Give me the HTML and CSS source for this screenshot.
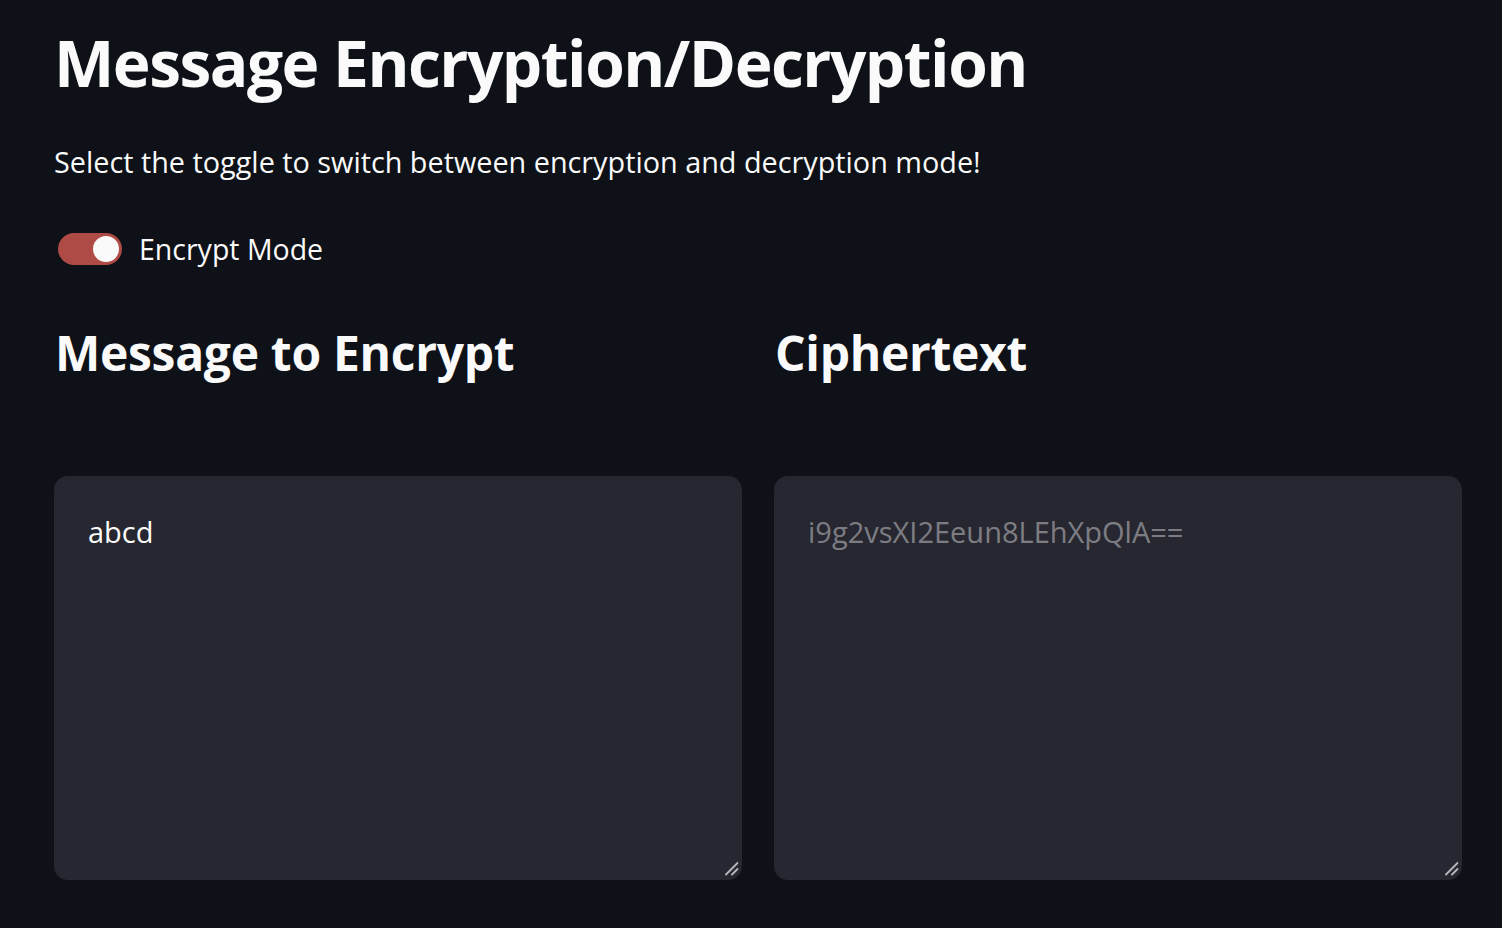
FILE: index.html
```html
<!DOCTYPE html>
<html lang="en">
<head>
<meta charset="utf-8">
<title>Message Encryption/Decryption</title>
<link rel="stylesheet" href="styles.css">
</head>
<body>
<main class="app">
  <h1 class="title">Message Encryption/Decryption</h1>
  <p class="lead">Select the toggle to switch between encryption and decryption mode!</p>
  <label class="toggle-row">
    <span class="toggle"><span class="knob"></span></span>
    <span class="toggle-label">Encrypt Mode</span>
  </label>
  <div class="columns">
    <section class="col">
      <h2 class="heading">Message to Encrypt</h2>
      <div class="box-wrap">
        <textarea class="box">abcd</textarea>
        <svg class="grip" width="16" height="16" viewBox="0 0 16 16" aria-hidden="true">
          <path d="M2 13.5 L13.5 2" stroke="#2a2b33" stroke-width="3.6" stroke-linecap="round"/>
          <path d="M8 13.5 L13.5 8" stroke="#2a2b33" stroke-width="3.6" stroke-linecap="round"/>
          <path d="M2 13.5 L13.5 2" stroke="#b8b9bf" stroke-width="1.8" stroke-linecap="round"/>
          <path d="M8 13.5 L13.5 8" stroke="#b8b9bf" stroke-width="1.8" stroke-linecap="round"/>
        </svg>
      </div>
    </section>
    <section class="col">
      <h2 class="heading">Ciphertext</h2>
      <div class="box-wrap">
        <textarea class="box box-disabled" disabled>i9g2vsXI2Eeun8LEhXpQlA==</textarea>
        <svg class="grip" width="16" height="16" viewBox="0 0 16 16" aria-hidden="true">
          <path d="M2 13.5 L13.5 2" stroke="#2a2b33" stroke-width="3.6" stroke-linecap="round"/>
          <path d="M8 13.5 L13.5 8" stroke="#2a2b33" stroke-width="3.6" stroke-linecap="round"/>
          <path d="M2 13.5 L13.5 2" stroke="#b8b9bf" stroke-width="1.8" stroke-linecap="round"/>
          <path d="M8 13.5 L13.5 8" stroke="#b8b9bf" stroke-width="1.8" stroke-linecap="round"/>
        </svg>
      </div>
    </section>
  </div>
</main>
</body>
</html>
```

FILE: styles.css
```css
html, body {
  margin: 0;
  padding: 0;
  background: #0e1117;
  color-scheme: dark;
}
body {
  font-family: "Open Sans", "Noto Sans", sans-serif;
  color: #fafafa;
  height: 928px;
  overflow: hidden;
}
.app {
  padding: 22px 40px 0 54px;
  display: flex;
  flex-direction: column;
}
.title {
  margin: 0;
  font-weight: 700;
  font-size: 64px;
  line-height: 82px;
  letter-spacing: -1.5px;
}
.lead {
  margin: 38px 0 0 0;
  font-size: 28.8px;
  line-height: 40px;
}
.toggle-row {
  margin-top: 51px;
  display: flex;
  align-items: center;
  gap: 17px;
  padding-left: 4px;
}
.toggle {
  width: 64px;
  height: 32px;
  border-radius: 16px;
  background: #ae4b46;
  display: flex;
  align-items: center;
  justify-content: flex-end;
  padding-right: 3px;
  box-sizing: border-box;
}
.knob {
  width: 26px;
  height: 26px;
  border-radius: 50%;
  background: #fafafa;
}
.toggle-label {
  font-size: 28.5px;
  line-height: 32px;
}
.columns {
  margin-top: 58px;
  display: grid;
  grid-template-columns: 1fr 1fr;
  gap: 32px;
}
.col {
  display: flex;
  flex-direction: column;
}
.heading {
  margin: 0 0 0 1px;
  font-weight: 700;
  font-size: 48px;
  line-height: 60px;
  letter-spacing: -0.3px;
  height: 153px;
}
.box-wrap {
  position: relative;
}
.box {
  display: block;
  box-sizing: border-box;
  width: 100%;
  height: 404px;
  border: none;
  border-radius: 14px;
  background: #262730;
  color: #fafafa;
  font-family: "Open Sans", "Noto Sans", sans-serif;
  font-size: 29px;
  line-height: 40px;
  padding: 36px 34px;
  outline: none;
  resize: none;
}
.box-disabled {
  color: rgba(250, 250, 250, 0.42);
}
.grip {
  position: absolute;
  right: 2px;
  bottom: 3px;
}
```
